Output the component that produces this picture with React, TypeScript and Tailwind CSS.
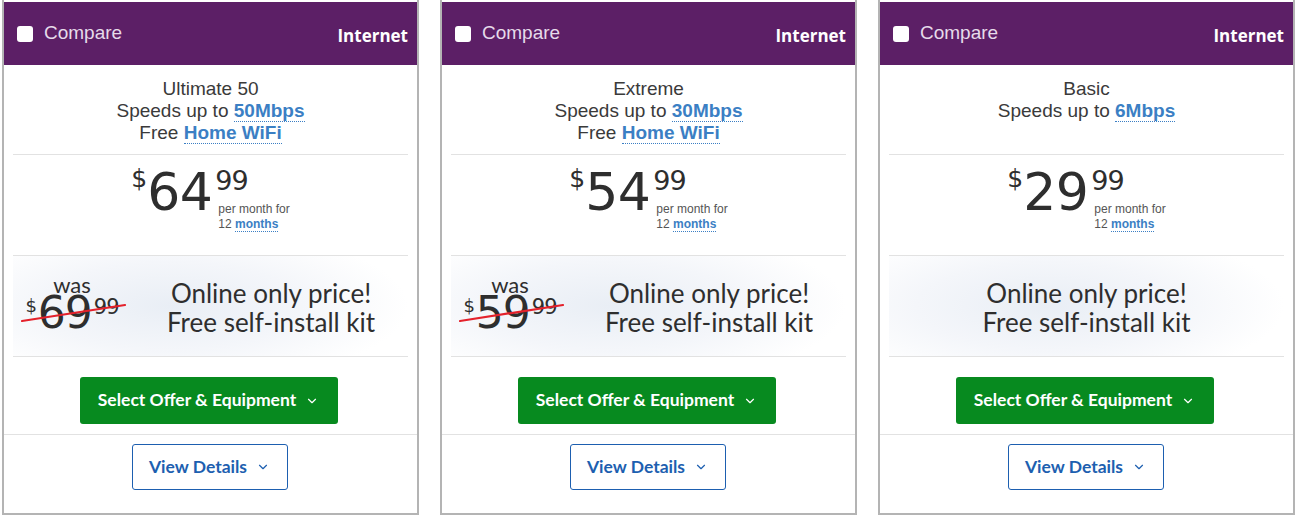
import { ChevronDown } from "lucide-react";

type Plan = {
  name: string;
  speed: string;
  wifi: boolean;
  dollars: string;
  cents: string;
  was?: { dollars: string; cents: string };
};

const plans: Plan[] = [
  { name: "Ultimate 50", speed: "50Mbps", wifi: true, dollars: "64", cents: "99", was: { dollars: "69", cents: "99" } },
  { name: "Extreme", speed: "30Mbps", wifi: true, dollars: "54", cents: "99", was: { dollars: "59", cents: "99" } },
  { name: "Basic", speed: "6Mbps", wifi: false, dollars: "29", cents: "99" },
];

const arial = "font-['Liberation_Sans',Arial,sans-serif]";
const lato = "font-['Lato','Open_Sans',sans-serif]";
const digits = "font-['DejaVu_Sans',sans-serif]";

function DottedLink({ children }: { children: React.ReactNode }) {
  return <span className="border-b border-dotted border-[#3b7fc4] font-bold text-[#3b7fc4]">{children}</span>;
}

function PlanCard({ plan }: { plan: Plan }) {
  return (
    <div className="flex h-[515px] w-[417px] flex-col border-2 border-t-0 border-[#b4b4b4] bg-white">
      {/* header */}
      <div className="mt-[2px] flex h-[63px] items-center justify-between bg-[#5c1f66] pl-[13px] pr-[9px]">
        <label className={`flex items-center gap-[11px] text-[19px] text-[#e6dbea] ${arial}`}>
          <span className="h-[16px] w-[16px] rounded-[3px] bg-white" />
          Compare
        </label>
        <span className="pt-[4px] font-['Open_Sans',sans-serif] text-[17px] font-bold text-white">Internet</span>
      </div>

      {/* plan name */}
      <div className={`flex h-[89px] flex-col items-center pt-[13px] text-[19px] leading-[22px] text-[#3a3a3a] ${arial}`}>
        <span>{plan.name}</span>
        <span>
          Speeds up to <DottedLink>{plan.speed}</DottedLink>
        </span>
        {plan.wifi && (
          <span>
            Free <DottedLink>Home WiFi</DottedLink>
          </span>
        )}
      </div>
      <div className="mx-[9px] h-px bg-[#e2e2e2]" />

      {/* price */}
      <div className={`flex h-[100px] items-start justify-center pt-[11px] text-[#2e2e2e] ${digits}`}>
        <span className="text-[25px] leading-none">$</span>
        <span className="text-[52px] leading-none tracking-[-0.5px]">{plan.dollars}</span>
        <div className="ml-[3px] flex flex-col">
          <span className="mt-[1px] text-[27px] leading-none tracking-[-1px]">{plan.cents}</span>
          <span className={`ml-[3px] mt-[8px] text-[12px] leading-[15px] text-[#555] ${arial}`}>per month for</span>
          <span className={`ml-[3px] text-[12px] leading-[15px] text-[#555] ${arial}`}>
            12 <DottedLink>months</DottedLink>
          </span>
        </div>
      </div>
      <div className="mx-[9px] h-px bg-[#e2e2e2]" />

      {/* promo */}
      <div
        className={`relative mx-[9px] flex h-[100px] items-center bg-[radial-gradient(ellipse_60%_80%_at_40%_50%,#e9eef5_0%,#f4f6fa_55%,#ffffff_100%)] text-[#2e2e2e] ${lato} ${
          plan.was ? "pl-[8px]" : "justify-center"
        }`}
      >
        {plan.was && (
          <>
            <div className="mt-[-7px] flex w-[102px] flex-col items-center">
              <span className="text-[22px] leading-[20px]">was</span>
              <div className={`flex items-start ${digits}`}>
                <span className="mr-[1px] mt-[2px] text-[18px] leading-none">$</span>
                <span className="text-[44px] leading-[36px] tracking-[-1px]">{plan.was.dollars}</span>
                <span className="ml-[2px] mt-[2px] text-[21px] leading-none tracking-[-1px]">{plan.was.cents}</span>
              </div>
            </div>
            <svg className="absolute left-[8px] top-[47px]" width="106" height="20" viewBox="0 0 106 20">
              <line x1="1" y1="18" x2="104" y2="2" stroke="#e4212b" strokeWidth="2.2" strokeLinecap="round" />
            </svg>
          </>
        )}
        <div className={`mt-[3px] flex flex-col items-center text-[26px] leading-[29px] ${plan.was ? "ml-[44px]" : ""}`}>
          <span>Online only price!</span>
          <span>Free self-install kit</span>
        </div>
      </div>
      <div className="mx-[9px] h-px bg-[#e2e2e2]" />

      {/* select */}
      <div className="flex h-[77px] justify-center pr-[4px] pt-[20px]">
        <button
          className={`flex h-[47px] w-[258px] items-center justify-center gap-[9px] rounded-[3px] bg-[#078a1f] text-[17.5px] font-bold text-white ${lato}`}
        >
          Select Offer &amp; Equipment
          <ChevronDown size={14} strokeWidth={2} />
        </button>
      </div>
      <div className="h-px bg-[#e2e2e2]" />

      {/* details */}
      <div className="flex h-[78px] justify-center pr-[2px] pt-[9px]">
        <button
          className={`flex h-[46px] w-[156px] items-center justify-center gap-[9px] rounded-[3px] border-[1.5px] border-[#1d5fb0] bg-white text-[17.5px] font-bold text-[#1d5fb0] ${lato}`}
        >
          View Details
          <ChevronDown size={14} strokeWidth={2} />
        </button>
      </div>
    </div>
  );
}

export default function App() {
  return (
    <div className="flex h-[518px] w-[1300px] gap-[21px] bg-white pl-[2px]">
      {plans.map((p) => (
        <PlanCard key={p.name} plan={p} />
      ))}
    </div>
  );
}
